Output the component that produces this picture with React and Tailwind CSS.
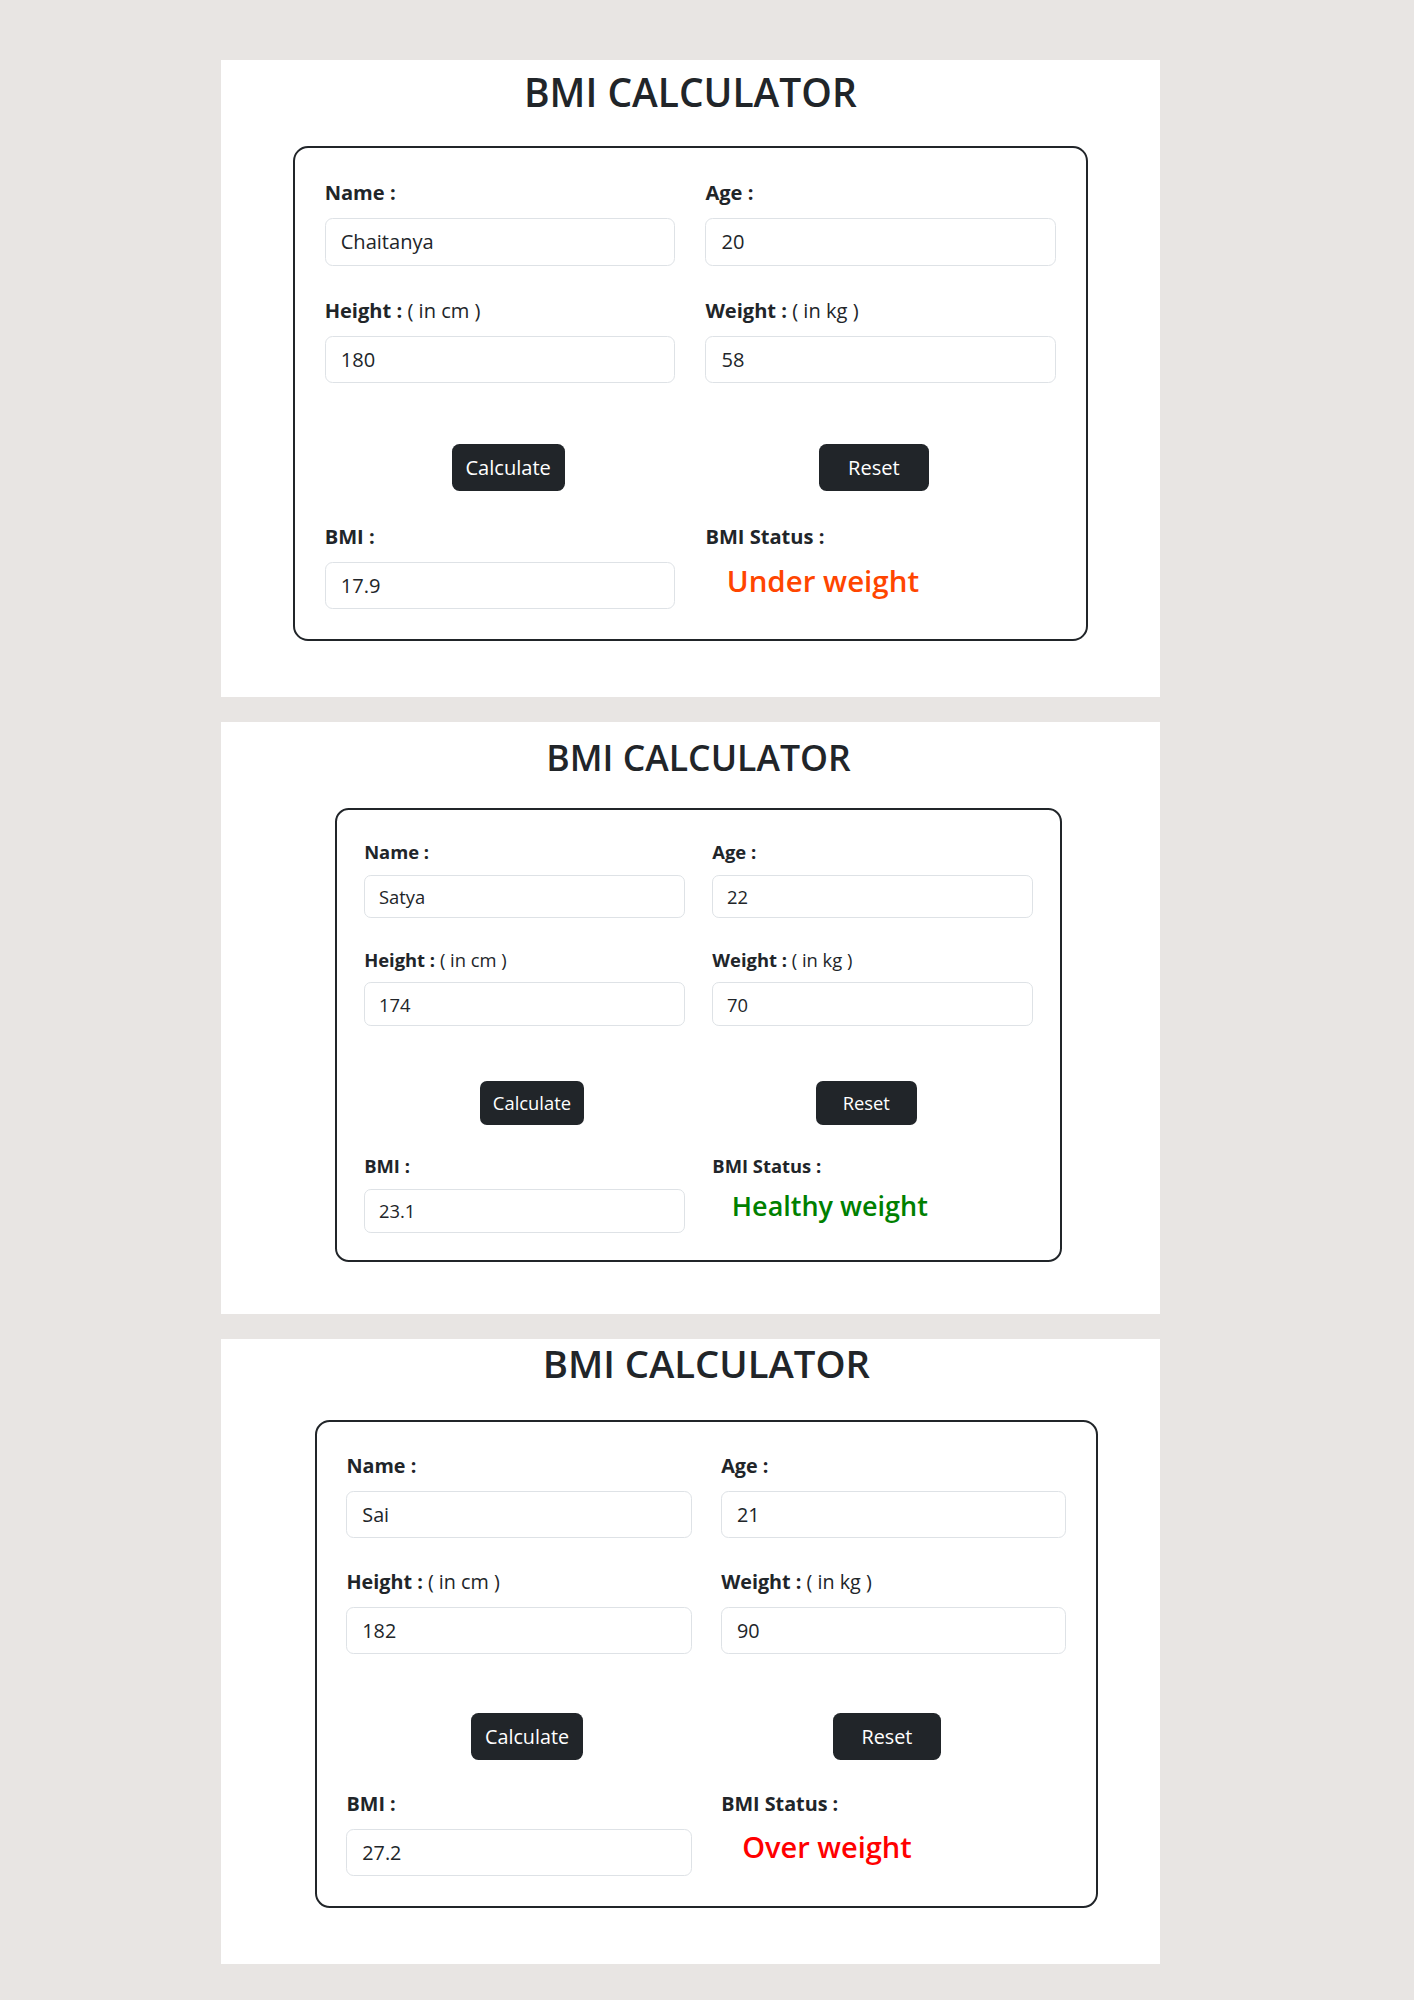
import React from 'react';

// Three screenshots of the same BMI form, each taken at a different browser zoom.
const panels = [
    {
        box: 'h-[637px]',
        zoom: '[zoom:1.255] pl-[57px] pt-[7px]',
        gap: 'mb-[24px]',
        name: 'Chaitanya', age: '20', height: '180', weight: '58', bmi: '17.9',
        status: 'Under weight', color: 'text-[#ff4500]',
    },
    {
        box: 'h-[592px]',
        zoom: '[zoom:1.148] pl-[99px] pt-[12px]',
        gap: 'mb-[26px]',
        name: 'Satya', age: '22', height: '174', weight: '70', bmi: '23.1',
        status: 'Healthy weight', color: 'text-[#008000]',
    },
    {
        box: 'h-[625px]',
        zoom: '[zoom:1.235] pl-[76px] pt-[2px]',
        gap: 'mb-[26px]',
        name: 'Sai', age: '21', height: '182', weight: '90', bmi: '27.2',
        status: 'Over weight', color: 'text-[#ff0000]',
    },
];

function Field({ label, unit, value }) {
    return (
        <div className="flex flex-col">
            <label className="mb-2 text-base leading-6 font-bold">
                {label}
                {unit && <span className="font-normal"> {unit}</span>}
            </label>
            <input
                type="text"
                defaultValue={value}
                readOnly
                className="h-[38px] w-full rounded-md border border-[#dee2e6] bg-white px-3 text-base leading-6 text-[#212529] outline-none"
            />
        </div>
    );
}

function Calculator({ p }) {
    return (
        <div className={`w-[939px] bg-white ${p.box}`}>
            <div className={p.zoom}>
                <div className="w-[634px]">
                    <h2 className={`text-center text-[31px] leading-[1.2] font-semibold ${p.gap}`}>
                        BMI CALCULATOR
                    </h2>

                    <div className="rounded-xl border-2 border-[#212529] p-6">
                        <div className="grid grid-cols-2 gap-6">
                            <Field label="Name :" value={p.name} />
                            <Field label="Age :" value={p.age} />
                            <Field label="Height :" unit="( in cm )" value={p.height} />
                            <Field label="Weight :" unit="( in kg )" value={p.weight} />
                        </div>

                        <div className="mt-12 flex justify-around">
                            <button className="h-[38px] w-[90px] rounded-md bg-[#212529] text-base text-white">
                                Calculate
                            </button>
                            <button className="h-[38px] w-[88px] rounded-md bg-[#212529] text-base text-white">
                                Reset
                            </button>
                        </div>

                        <div className="mt-6 grid grid-cols-2 gap-6">
                            <Field label="BMI :" value={p.bmi} />
                            <div className="flex flex-col">
                                <span className="mb-2 text-base leading-6 font-bold">BMI Status :</span>
                                <div className={`flex h-[38px] items-center pb-2 pl-[17px] text-[23.5px] leading-[1.2] font-semibold ${p.color}`}>
                                    {p.status}
                                </div>
                            </div>
                        </div>
                    </div>
                </div>
            </div>
        </div>
    );
}

export default function App() {
    return (
        <div className="flex min-h-[2000px] flex-col gap-[25px] bg-[#e8e5e3] pt-[60px] pl-[221px] font-['Open_Sans',sans-serif] text-[#212529]">
            {panels.map((p, i) => (
                <Calculator key={i} p={p} />
            ))}
        </div>
    );
}
